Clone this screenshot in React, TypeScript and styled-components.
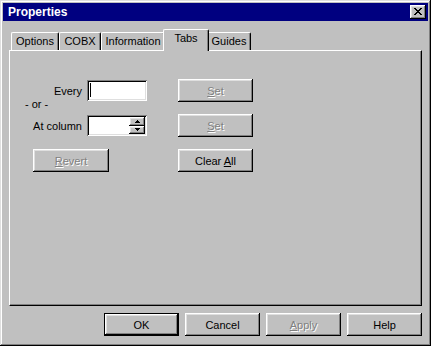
import styled, { createGlobalStyle } from 'styled-components';

const GlobalStyle = createGlobalStyle`
  html, body {
    margin: 0;
    padding: 0;
    background: #c0c0c0;
  }
  body {
    width: 431px;
    height: 346px;
    overflow: hidden;
    font-family: "Liberation Sans", Arial, sans-serif;
    font-size: 11px;
    color: #000;
  }
`;

const raised = `
  box-shadow: inset -1px -1px #000, inset 1px 1px #fff, inset -2px -2px #808080,
    inset 2px 2px #dfdfdf;
`;

const Window = styled.div`
  box-sizing: border-box;
  width: 431px;
  height: 346px;
  padding: 3px;
  background: #c0c0c0;
  box-shadow: inset -1px -1px #000, inset 1px 1px #dfdfdf, inset -2px -2px #808080,
    inset 2px 2px #fff;
  display: flex;
  flex-direction: column;
`;

const TitleBar = styled.div`
  height: 18px;
  flex: none;
  background: #000080;
  display: flex;
  align-items: center;
  justify-content: space-between;
  padding: 0 2px 0 5px;
`;

const Title = styled.span`
  color: #fff;
  font-weight: bold;
  font-size: 12px;
`;

const CloseButton = styled.div`
  width: 16px;
  height: 14px;
  background: #c0c0c0;
  ${raised}
  display: flex;
  align-items: center;
  justify-content: center;

  & svg {
    display: block;
    margin: 0 1px 1px 0;
  }
`;

const Body = styled.div`
  flex: 1;
  display: flex;
  flex-direction: column;
  padding: 8px 6px 7px;
`;

const TabStrip = styled.div`
  display: flex;
  align-items: flex-end;
  height: 21px;
  padding-left: 2px;
  position: relative;
  z-index: 1;
`;

const Tab = styled.div<{ $active?: boolean; $w: number }>`
  box-sizing: border-box;
  width: ${(p) => p.$w}px;
  height: ${(p) => (p.$active ? 22 : 18)}px;
  margin: ${(p) => (p.$active ? '0 -2px -1px' : '0')};
  background: #c0c0c0;
  border-top: 1px solid #fff;
  border-left: 1px solid #fff;
  border-right: 1px solid #000;
  box-shadow: inset -1px 0 #808080;
  border-radius: 2px 2px 0 0;
  display: flex;
  justify-content: center;
  padding-top: 2px;
  position: relative;
  z-index: ${(p) => (p.$active ? 2 : 1)};
`;

const Panel = styled.div`
  flex: 1;
  border-top: 1px solid #fff;
  border-left: 1px solid #fff;
  border-right: 1px solid #000;
  border-bottom: 1px solid #000;
  box-shadow: inset -1px -1px #808080;
  padding: 28px 0 0 15px;
`;

const Form = styled.div`
  display: grid;
  grid-template-columns: 62px 91px 75px;
  grid-template-rows: 23px 12px 23px 12px 23px;
`;

const Label = styled.div<{ $row: number }>`
  grid-column: 1;
  grid-row: ${(p) => p.$row};
  align-self: center;
  text-align: right;
  padding-right: 5px;
  white-space: nowrap;
`;

const OrLabel = styled.div`
  grid-column: 1;
  grid-row: 2;
  align-self: start;
  margin-top: -4px;
  white-space: nowrap;
`;

const Field = styled.div<{ $row: number }>`
  grid-column: 2;
  grid-row: ${(p) => p.$row};
  align-self: center;
  position: relative;
  box-sizing: border-box;
  width: 60px;
  height: 21px;
  background: #fff;
  box-shadow: inset 1px 1px #808080, inset -1px -1px #fff, inset 2px 2px #000,
    inset -2px -2px #dfdfdf;
  display: flex;
  justify-content: flex-end;
  padding: 2px;
`;

const Caret = styled.span`
  position: absolute;
  left: 3px;
  top: 3px;
  width: 1px;
  height: 14px;
  background: #000;
`;

const Spinner = styled.div`
  width: 16px;
  display: flex;
  flex-direction: column;
`;

const SpinButton = styled.div`
  flex: 1;
  background: #c0c0c0;
  ${raised}
  display: flex;
  align-items: center;
  justify-content: center;

  & svg {
    display: block;
  }
`;

const Button = styled.button<{ $default?: boolean; $col?: number; $row?: number }>`
  box-sizing: border-box;
  width: 75px;
  height: 23px;
  padding: 0;
  border: none;
  background: #c0c0c0;
  font: inherit;
  color: #000;
  ${(p) => (p.$col ? `grid-column: ${p.$col};` : '')}
  ${(p) => (p.$row ? `grid-row: ${p.$row};` : '')}
  box-shadow: ${(p) =>
    p.$default
      ? 'inset 0 0 0 1px #000, inset -2px -2px #000, inset 2px 2px #fff, inset -3px -3px #808080, inset 3px 3px #dfdfdf'
      : 'inset -1px -1px #000, inset 1px 1px #fff, inset -2px -2px #808080, inset 2px 2px #dfdfdf'};

  &:disabled {
    color: #808080;
    text-shadow: 1px 1px #fff;
  }
`;

const RevertButton = styled(Button)`
  grid-column: 1 / span 2;
  grid-row: 5;
  justify-self: start;
  margin-left: 8px;
  width: 76px;
`;

const Footer = styled.div`
  display: flex;
  justify-content: flex-end;
  gap: 6px;
  margin-top: 7px;
`;

const closeCells = [
  [0, 0], [1, 0], [6, 0], [7, 0],
  [1, 1], [2, 1], [5, 1], [6, 1],
  [2, 2], [3, 2], [4, 2], [5, 2],
  [3, 3], [4, 3],
  [2, 4], [3, 4], [4, 4], [5, 4],
  [1, 5], [2, 5], [5, 5], [6, 5],
  [0, 6], [1, 6], [6, 6], [7, 6],
];

const CloseGlyph = () => (
  <svg width="8" height="7" viewBox="0 0 8 7" shapeRendering="crispEdges">
    {closeCells.map(([x, y]) => (
      <rect key={`${x}-${y}`} x={x} y={y} width="1" height="1" fill="#000" />
    ))}
  </svg>
);

const Arrow = ({ up }: { up?: boolean }) => (
  <svg width="5" height="3" viewBox="0 0 5 3" shapeRendering="crispEdges">
    {up ? (
      <>
        <rect x="2" y="0" width="1" height="1" fill="#000" />
        <rect x="1" y="1" width="3" height="1" fill="#000" />
        <rect x="0" y="2" width="5" height="1" fill="#000" />
      </>
    ) : (
      <>
        <rect x="0" y="0" width="5" height="1" fill="#000" />
        <rect x="1" y="1" width="3" height="1" fill="#000" />
        <rect x="2" y="2" width="1" height="1" fill="#000" />
      </>
    )}
  </svg>
);

const tabs = [
  { label: 'Options', w: 48 },
  { label: 'COBX', w: 42 },
  { label: 'Information', w: 64 },
  { label: 'Tabs', w: 46, active: true },
  { label: 'Guides', w: 44 },
];

export default function App() {
  return (
    <>
      <GlobalStyle />
      <Window>
        <TitleBar>
          <Title>Properties</Title>
          <CloseButton>
            <CloseGlyph />
          </CloseButton>
        </TitleBar>

        <Body>
          <TabStrip>
            {tabs.map((t) => (
              <Tab key={t.label} $w={t.w} $active={t.active}>
                {t.label}
              </Tab>
            ))}
          </TabStrip>

          <Panel>
            <Form>
              <Label $row={1}>Every</Label>
              <Field $row={1}>
                <Caret />
              </Field>
              <Button $col={3} $row={1} disabled>
                <u>S</u>et
              </Button>

              <OrLabel>- or -</OrLabel>

              <Label $row={3}>At column</Label>
              <Field $row={3}>
                <Spinner>
                  <SpinButton>
                    <Arrow up />
                  </SpinButton>
                  <SpinButton>
                    <Arrow />
                  </SpinButton>
                </Spinner>
              </Field>
              <Button $col={3} $row={3} disabled>
                <u>S</u>et
              </Button>

              <RevertButton disabled>
                <u>R</u>evert
              </RevertButton>
              <Button $col={3} $row={5}>
                Clear <u>A</u>ll
              </Button>
            </Form>
          </Panel>

          <Footer>
            <Button $default>OK</Button>
            <Button>Cancel</Button>
            <Button disabled>
              <u>A</u>pply
            </Button>
            <Button>Help</Button>
          </Footer>
        </Body>
      </Window>
    </>
  );
}
